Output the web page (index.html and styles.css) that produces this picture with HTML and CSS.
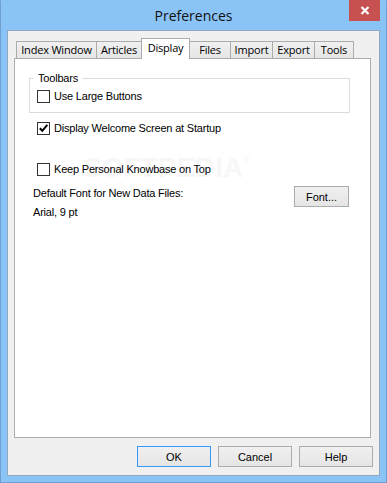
FILE: index.html
```html
<!DOCTYPE html>
<html lang="en">
<head>
    <meta charset="UTF-8">
    <title>Preferences</title>
    <link rel="stylesheet" href="styles.css">
</head>
<body>
    <div class="window">
        <div class="titlebar">
            <span></span>
            <div class="title">Preferences</div>
            <div class="close">
                <svg width="10" height="9" viewBox="0 0 10 9"><path d="M1.5 1 L8.5 8 M8.5 1 L1.5 8" stroke="#fff" stroke-width="2.2"/></svg>
            </div>
        </div>
        <div class="client">
            <!-- tab strip -->
            <div class="tabs">
                <div class="tab tab-index">Index Window</div>
                <div class="tab tab-articles">Articles</div>
                <div class="tab tab-display active">Display</div>
                <div class="tab tab-files">Files</div>
                <div class="tab tab-import">Import</div>
                <div class="tab tab-export">Export</div>
                <div class="tab tab-tools">Tools</div>
            </div>
            <div class="panel">
                <div class="group">
                    <span class="group-title">Toolbars</span>
                    <label class="check in-group"><span class="box"></span>Use Large Buttons</label>
                </div>
                <label class="check welcome"><span class="box"><svg width="11" height="11" viewBox="0 0 11 11"><path d="M1.8 5.2 L4.3 7.8 L9.3 1.8" fill="none" stroke="#000" stroke-width="2"/></svg></span>Display Welcome Screen at Startup</label>
                <label class="check on-top"><span class="box"></span>Keep Personal Knowbase on Top</label>
                <div class="font-row">
                    <div class="font-text">
                        <div>Default Font for New Data Files:</div>
                        <div>Arial, 9 pt</div>
                    </div>
                    <button class="btn font-btn">Font...</button>
                </div>
                <div class="watermark">SOFTPEDIA<sup>®</sup></div>
            </div>
            <div class="buttons">
                <button class="btn default">OK</button>
                <button class="btn">Cancel</button>
                <button class="btn">Help</button>
            </div>
        </div>
    </div>
</body>
</html>
```

FILE: styles.css
```css
body {
    margin: 0;
    font-family: 'Liberation Sans', Arial, sans-serif;
    font-size: 11px;
    color: #000;
}
.window {
    width: 387px;
    height: 483px;
    box-sizing: border-box;
    background: #8ac3f6;
    border: 1px solid #6f9fd0;
    border-top-color: #8ac3f6;
}
.titlebar {
    height: 29px;
    display: grid;
    grid-template-columns: 1fr auto 1fr;
    align-items: start;
}
.title {
    font-family: 'Open Sans', sans-serif;
    font-size: 14px;
    line-height: 29px;
    color: #111;
}
.close {
    justify-self: end;
    margin-top: -1px;
    margin-right: 6px;
    width: 31px;
    height: 21px;
    background: #c75050;
    display: flex;
    align-items: center;
    justify-content: center;
}
.client {
    margin: 0 6px;
    height: 446px;
    box-sizing: border-box;
    border: 1px solid #8ea8c2;
    background: #f0f0f0;
    padding-top: 7px;
}
.tabs {
    display: flex;
    align-items: flex-end;
    height: 21px;
    margin: 0 0 -1px 8px;
}
.tab {
    position: relative;
    box-sizing: border-box;
    height: 18px;
    margin-right: -1px;
    border: 1px solid #acacac;
    background: linear-gradient(#f0f0f0, #e5e5e5);
    font-family: 'Open Sans', sans-serif;
    font-size: 11px;
    letter-spacing: -0.2px;
    line-height: 15px;
    text-align: center;
    color: #000;
}
.tab.active {
    height: 21px;
    border-bottom: none;
    background: #fff;
    line-height: 17px;
    z-index: 1;
}
.tab-index { width: 81px; }
.tab-articles { width: 46px; }
.tab-display { width: 49px; }
.tab-files { width: 42px; }
.tab-import { width: 43px; }
.tab-export { width: 43px; }
.tab-tools { width: 40px; }
.panel {
    position: relative;
    z-index: 0;
    height: 380px;
    box-sizing: border-box;
    margin: 0 8px 0 6px;
    border: 1px solid #acacac;
    background: #fff;
    overflow: hidden;
}
.group {
    margin: 19px 20px 0 14px;
    border: 1px solid #dcdcdc;
    padding: 0 0 9px 4px;
}
.group-title {
    display: block;
    width: max-content;
    margin-top: -7px;
    padding: 0 4px;
    background: #fff;
    line-height: 13px;
    letter-spacing: -0.2px;
}
.check {
    display: flex;
    align-items: center;
    gap: 4px;
    line-height: 13px;
    letter-spacing: -0.2px;
}
.check.in-group {
    margin: 5px 0 0 3px;
}
.check.welcome {
    margin: 9px 0 0 22px;
}
.check.on-top {
    margin: 28px 0 0 22px;
}
.box {
    width: 13px;
    height: 13px;
    box-sizing: border-box;
    border: 1px solid #333;
    background: #fff;
    display: flex;
}
.font-row {
    display: flex;
    justify-content: space-between;
    align-items: flex-start;
    margin: 8px 21px 0 18px;
}
.font-text {
    line-height: 19px;
    letter-spacing: -0.2px;
}
.btn {
    box-sizing: border-box;
    width: 74px;
    height: 21px;
    padding: 0;
    border: 1px solid #acacac;
    background: linear-gradient(#f0f0f0, #e5e5e5);
    font-family: 'Liberation Sans', Arial, sans-serif;
    font-size: 11px;
    color: #000;
}
.btn.default {
    border-color: #3399ff;
}
.font-btn {
    width: 55px;
    margin-top: 2px;
}
.buttons {
    display: flex;
    justify-content: flex-end;
    gap: 7px;
    margin: 8px 6px 0 0;
}
.watermark {
    position: absolute;
    z-index: -1;
    left: 68px;
    top: 97px;
    font-size: 28px;
    line-height: 24px;
    font-weight: bold;
    color: #f7f7f7;
}
.watermark sup {
    font-size: 9px;
    line-height: 9px;
    vertical-align: 14px;
}
```
